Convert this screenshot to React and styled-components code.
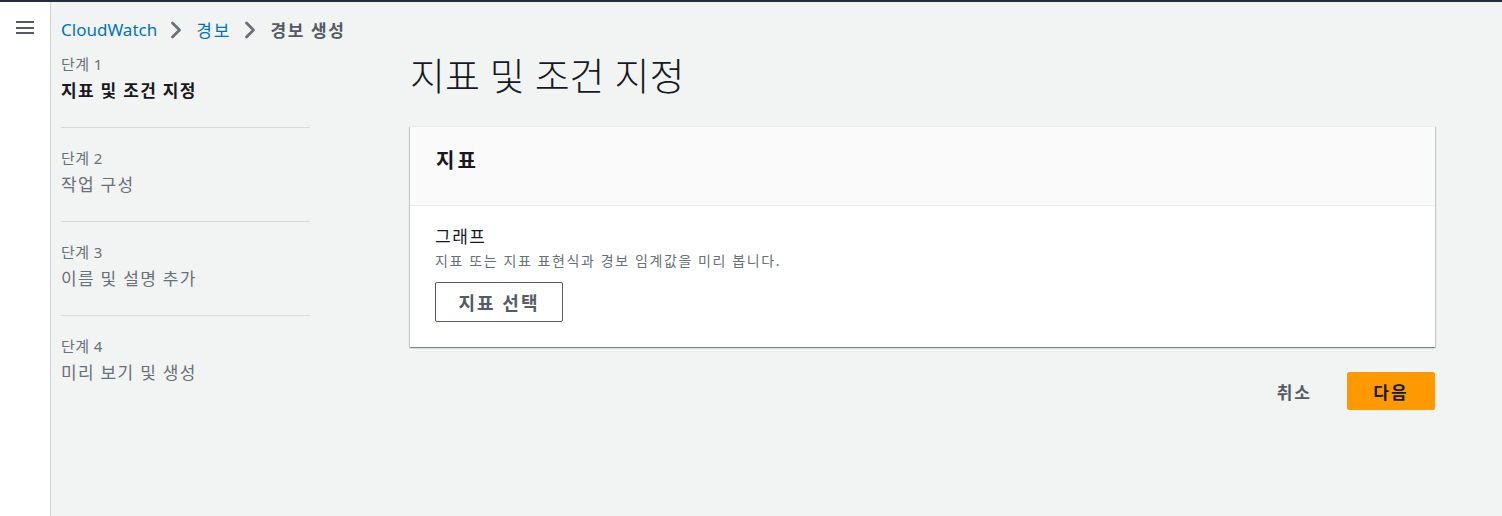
import styled, { createGlobalStyle } from 'styled-components';

const GlobalStyle = createGlobalStyle`
  html, body {
    margin: 0;
    padding: 0;
    background: #f2f3f3;
    font-family: "Noto Sans", "Noto Sans CJK KR", sans-serif;
    color: #16191f;
  }
  * { box-sizing: border-box; }
`;

const Page = styled.div`
  display: flex;
  min-height: 516px;
  border-top: 2px solid #232f3e;
`;

const Rail = styled.div`
  width: 51px;
  flex: none;
  background: #fff;
  border-right: 1px solid #d0d5d8;
  display: flex;
  justify-content: center;
  padding-top: 17px;
  padding-right: 1px;
`;

const MenuButton = styled.button`
  border: 0;
  background: none;
  width: 18px;
  height: 17px;
  display: flex;
  flex-direction: column;
  justify-content: space-between;
  padding: 2px 0;
  cursor: pointer;

  span {
    display: block;
    height: 2px;
    background: #545b64;
  }
`;

const Content = styled.div`
  flex: 1;
  padding: 15px 67px 0 10px;
`;

const Breadcrumbs = styled.nav`
  display: flex;
  align-items: center;
  height: 24px;
  font-size: 17px;
`;

const Crumb = styled.a`
  color: ${(p) => (p.$current ? '#545b64' : '#0073bb')};
  font-weight: ${(p) => (p.$current ? 700 : 400)};
  letter-spacing: ${(p) => p.$ls || 0}px;
  text-decoration: none;
`;

const Chevron = styled.svg`
  width: 12px;
  height: 18px;
  margin: 2px 14px 0 13px;
  flex: none;
`;

const Layout = styled.div`
  display: grid;
  grid-template-columns: 249px 1fr;
  column-gap: 100px;
`;

const Steps = styled.ol`
  list-style: none;
  margin: 0;
  padding: 0;
`;

const Step = styled.li`
  padding: ${(p) => (p.$first ? '13px' : '20px')} 0 23px;
  border-bottom: ${(p) => (p.$last ? 'none' : '1px solid #d5dbdb')};
`;

const StepNumber = styled.div`
  font-size: 15px;
  line-height: 20px;
  letter-spacing: 0.4px;
  color: #687078;
`;

const StepTitle = styled.div`
  font-size: 17px;
  line-height: 26px;
  letter-spacing: 1.3px;
  margin-top: 4px;
  color: ${(p) => (p.$active ? '#16191f' : '#687078')};
  font-weight: ${(p) => (p.$active ? 700 : 400)};
`;

const Main = styled.main`
  padding-top: 9px;
`;

const Heading = styled.h1`
  margin: 0;
  font-size: 38px;
  line-height: 50px;
  font-weight: 300;
  color: #16191f;
`;

const Card = styled.section`
  margin-top: 26px;
  background: #fff;
  box-shadow: 0 1px 1px 0 rgba(0, 28, 36, 0.3), 1px 1px 1px 0 rgba(0, 28, 36, 0.15),
    -1px 1px 1px 0 rgba(0, 28, 36, 0.15);
  border-top: 1px solid #eaeded;
`;

const CardHeader = styled.header`
  background: #fafafa;
  border-bottom: 1px solid #eaeded;
  height: 79px;
  padding: 20px 26px 0;

  h2 {
    margin: 0;
    font-size: 20px;
    line-height: 28px;
    letter-spacing: 3px;
    font-weight: 700;
  }
`;

const CardBody = styled.div`
  padding: 20px 25px 25px;
`;

const Label = styled.div`
  font-size: 17px;
  line-height: 22px;
  letter-spacing: 1.5px;
  color: #16191f;
`;

const Description = styled.div`
  margin-top: 3px;
  font-size: 14px;
  line-height: 20px;
  letter-spacing: 1.6px;
  color: #687078;
`;

const Button = styled.button`
  font-family: inherit;
  font-size: 17px;
  font-weight: 700;
  letter-spacing: 2px;
  border-radius: 2px;
  cursor: pointer;
  height: ${(p) => p.$h || 40}px;
  width: ${(p) => (p.$w ? `${p.$w}px` : 'auto')};
  padding: 0 ${(p) => p.$px ?? 20}px;
  border: ${(p) => (p.$variant === 'link' ? '1px solid transparent' : p.$variant === 'primary' ? '1px solid #ff9900' : '1px solid #545b64')};
  background: ${(p) => (p.$variant === 'primary' ? '#ff9900' : p.$variant === 'link' ? 'transparent' : '#fff')};
  color: ${(p) => (p.$variant === 'primary' ? '#16191f' : '#545b64')};
`;

const SelectButton = styled(Button)`
  margin-top: 11px;
  font-size: 18px;
`;

const Actions = styled.div`
  display: flex;
  justify-content: flex-end;
  align-items: center;
  gap: 18px;
  margin-top: 25px;
`;

const ChevronIcon = () => (
  <Chevron viewBox="0 0 12 18">
    <path d="M2.5 2 L9.5 9 L2.5 16" fill="none" stroke="#687078" strokeWidth="2.8" strokeLinecap="round" strokeLinejoin="round" />
  </Chevron>
);

const steps = ['지표 및 조건 지정', '작업 구성', '이름 및 설명 추가', '미리 보기 및 생성'];

export default function App() {
  return (
    <>
      <GlobalStyle />
      <Page>
        <Rail>
          <MenuButton aria-label="메뉴">
            <span />
            <span />
            <span />
          </MenuButton>
        </Rail>
        <Content>
          <Breadcrumbs>
            <Crumb href="#">CloudWatch</Crumb>
            <ChevronIcon />
            <Crumb href="#" $ls={2}>경보</Crumb>
            <ChevronIcon />
            <Crumb $current $ls={1.6}>경보 생성</Crumb>
          </Breadcrumbs>
          <Layout>
            <Steps>
              {steps.map((title, i) => (
                <Step key={i} $first={i === 0} $last={i === steps.length - 1}>
                  <StepNumber>단계 {i + 1}</StepNumber>
                  <StepTitle $active={i === 0}>{title}</StepTitle>
                </Step>
              ))}
            </Steps>
            <Main>
              <Heading>지표 및 조건 지정</Heading>
              <Card>
                <CardHeader>
                  <h2>지표</h2>
                </CardHeader>
                <CardBody>
                  <Label>그래프</Label>
                  <Description>지표 또는 지표 표현식과 경보 임계값을 미리 봅니다.</Description>
                  <SelectButton $w={128} $px={0}>지표 선택</SelectButton>
                </CardBody>
              </Card>
              <Actions>
                <Button $variant="link" $h={38} $px={16}>취소</Button>
                <Button $variant="primary" $h={38} $px={0} $w={88}>다음</Button>
              </Actions>
            </Main>
          </Layout>
        </Content>
      </Page>
    </>
  );
}
